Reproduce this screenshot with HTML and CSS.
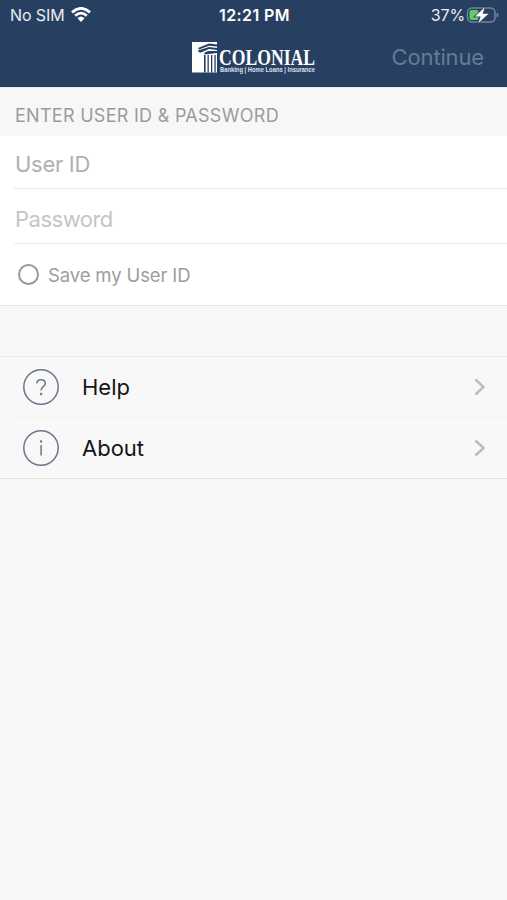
FILE: index.html
```html
<!DOCTYPE html>
<html lang="en">
<head>
<meta charset="utf-8">
<title>Colonial</title>
<link rel="stylesheet" href="styles.css">
</head>
<body>
<header class="header">
  <div class="status">
    <div class="carrier"><span>No SIM</span>
      <svg class="wifi" width="20" height="16" viewBox="0 0 20 16" fill="none" stroke="#fff" stroke-width="2.8"><path d="M1 5.4Q10-2.6 19 5.4M4.2 8.8Q10 3.4 15.8 8.8"/><path d="M6.5 11.3Q10 7.9 13.5 11.3L10 15Z" fill="#fff" stroke="none"/></svg>
    </div>
    <div class="clock">12:21 PM</div>
    <div class="power"><span>37%</span>
      <svg width="34" height="18" viewBox="0 0 34 18"><rect x="2.500" y="2" width="27.500" height="14" rx="4.5" fill="none" stroke="#71849c" stroke-width="1.5"/><path d="M31.500 6.5q2 .7 2 2.6t-2 2.6z" fill="#71849c"/><rect x="4.500" y="4" width="9" height="10" rx="2" fill="#62cc62"/><path d="M20 1L10 10.400h5.700L13.200 17.200 23.500 7.800h-5.900z" fill="#fff" stroke="#274061" stroke-width="1.600" paint-order="stroke"/></svg>
    </div>
  </div>
  <div class="navbar">
    <svg class="logo" width="125" height="34" viewBox="0 0 125 34">
      <rect x="1" y="2" width="25" height="30.500" fill="#fff"/>
      <g fill="#274061"><path d="M7 8L18 3.500 26 4.500V6.500L18 5.700 8 9.500zM7 10.500L18 7 26 8V10L18 9 10 12.500q-3 .5-3-2zM13 13L17 11H26V13L14 14.500z"/><path d="M13 15h1.600v17.500h-1.600zM16.500 15h1.300v17.500h-1.300zM20 15h1.300v17.500H20zM23.400 15h1.300v17.500h-1.300z"/></g>
      <text class="brand" x="28" y="25" textLength="96" lengthAdjust="spacingAndGlyphs">COLONIAL</text>
      <text class="tagline" x="29" y="32" textLength="95" lengthAdjust="spacingAndGlyphs">Banking | Home Loans | Insurance</text>
    </svg>
    <span class="continue">Continue</span>
  </div>
</header>
<main>
  <h1 class="heading"><span>ENTER USER ID &amp; PASSWORD</span></h1>
  <section class="form">
    <div class="field user"><span>User ID</span></div>
    <div class="field password"><span>Password</span></div>
    <div class="save"><i class="radio"></i><span>Save my User ID</span></div>
  </section>
  <nav class="menu">
    <a class="item"><svg class="icon" width="38" height="38" viewBox="0 0 38 38"><circle cx="19" cy="19" r="17.200"/><path d="M14.700 15.300C15 12.800 16.700 11.700 19 11.700c2.500 0 4.300 1.500 4.300 3.700 0 3.400-4.200 3.200-4.200 7"/><circle class="dot" cx="19.100" cy="26" r="1.200"/></svg><span class="help">Help</span><svg class="chevron" width="12" height="18" viewBox="0 0 12 18"><path d="M1.500 1.500L9.500 9l-8 7.500"/></svg></a>
    <a class="item"><svg class="icon" width="38" height="38" viewBox="0 0 38 38"><circle cx="19" cy="19" r="17.200"/><path d="M19.100 16v10.500"/><circle class="dot" cx="19.100" cy="12.500" r="1.200"/></svg><span class="about">About</span><svg class="chevron" width="12" height="18" viewBox="0 0 12 18"><path d="M1.500 1.500L9.500 9l-8 7.500"/></svg></a>
  </nav>
</main>
</body>
</html>
```
FILE: styles.css
```css
* { box-sizing: border-box; }
body { margin: 0; min-height: 900px; background: #f7f7f7; font-family: Inter, "Liberation Sans", sans-serif; }
.header { height: 87px; background: #274061; color: #fff; }
.status { height: 30px; display: grid; grid-template-columns: 1fr auto 1fr; align-items: center; padding: 0 8px 0 10px; font-size: 16px; }
.carrier, .power { display: flex; align-items: center; color: #e9edf2; }
.carrier { gap: 6px; letter-spacing: -.1px; }
.clock { font-weight: 600; letter-spacing: .4px; }
.power { justify-content: flex-end; gap: 0; letter-spacing: -.1px; }
.navbar { height: 57px; display: grid; grid-template-columns: 1fr 125px 1fr; align-items: center; padding-right: 23px; padding-left: 23px; }
.logo { grid-column: 2; margin-top: -3px; overflow: visible; }
.brand { font: bold 23px "Liberation Serif", serif; fill: #fff; }
.tagline { font: bold 6.500px "Liberation Sans", sans-serif; fill: #dce3ea; }
.continue { justify-self: end; margin-top: -3px; font-size: 22px; color: #667b95; letter-spacing: -.15px; }
.heading { margin: 0; height: 49px; padding: 6px 15px 0; display: flex; align-items: center; font-size: 18px; font-weight: 400; letter-spacing: .28px; color: #9b9b9b; border-top: 1px solid #e8edf2; }
.form { height: 170px; background: #fff; border-bottom: 1px solid #e5e5e5; }
.field { margin-left: 14px; padding-left: 1px; display: flex; align-items: center; font-size: 22px; border-bottom: 1px solid #e7e7e7; }
.user { height: 53px; padding-top: 4px; color: #b0b0b0; letter-spacing: -.3px; }
.password { height: 55px; padding-top: 5px; color: #c5c5c5; letter-spacing: -.5px; border-color: #ededed; }
.save { height: 61px; display: flex; align-items: center; padding-left: 18px; gap: 9px; font-size: 18.500px; letter-spacing: -.13px; color: #9d9d9d; }
.radio { width: 21px; height: 21px; border: 2px solid #999; border-radius: 50%; }
.menu { margin-top: 50px; border-top: 1px solid #e9e9e9; border-bottom: 1px solid #e5e5e5; background: #f8f8f8; }
.item { height: 60px; display: flex; align-items: center; padding: 0 21px 0 22px; font-size: 22px; color: #151515; }
.item + .item { height: 61px; margin-left: 14px; padding-left: 8px; border-top: 1px solid #f1f1f1; }
.icon { margin-right: 22px; fill: none; stroke: #69768b; stroke-width: 1.500; }
.dot { fill: #69768b; stroke: none; }
.chevron { margin-left: auto; fill: none; stroke: #bcbcbc; stroke-width: 2.400; }
```
